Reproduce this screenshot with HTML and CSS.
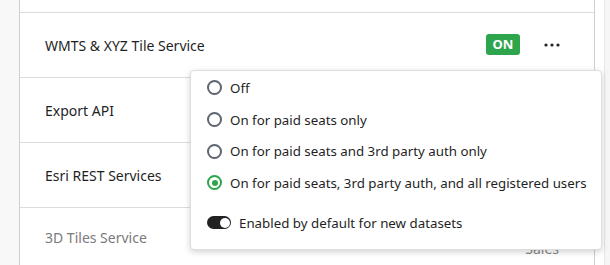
FILE: index.html
```html
<!DOCTYPE html>
<html>
<head>
<meta charset="utf-8">
<link rel="stylesheet" href="styles.css">
</head>
<body>
<div class="page">
  <div class="sidebar"></div>
  <div class="main">
    <div class="row row-top"></div>
    <div class="row row-active">
      <span class="label">WMTS &amp; XYZ Tile Service</span>
      <div class="actions">
        <span class="badge">ON</span>
        <svg class="dots" width="16" height="4" viewBox="0 0 16 4"><circle cx="2" cy="2" r="1.6" fill="#222"/><circle cx="8" cy="2" r="1.6" fill="#222"/><circle cx="14" cy="2" r="1.6" fill="#222"/></svg>
      </div>
      <div class="popup">
        <label class="opt"><span class="radio"></span><span>Off</span></label>
        <label class="opt"><span class="radio"></span><span>On for paid seats only</span></label>
        <label class="opt"><span class="radio"></span><span>On for paid seats and 3rd party auth only</span></label>
        <label class="opt"><span class="radio checked"></span><span>On for paid seats, 3rd party auth, and all registered users</span></label>
        <label class="opt toggle-row"><span class="toggle"><span class="knob"></span></span><span>Enabled by default for new datasets</span></label>
      </div>
    </div>
    <div class="row"><span class="label">Export API</span></div>
    <div class="row"><span class="label">Esri REST Services</span></div>
    <div class="row row-last">
      <span class="label muted">3D Tiles Service</span>
      <span class="sales">Sales</span>
    </div>
  </div>
  <div class="gutter"></div>
  <div class="rest"></div>
</div>
</body>
</html>
```
FILE: styles.css
```css
html, body {
  margin: 0;
  padding: 0;
  height: 100%;
  overflow: hidden;
}
body {
  font-family: "Noto Sans", "Open Sans", sans-serif;
  font-size: 14px;
  color: #1f1f1f;
  background: #f8f8f8;
}
.page {
  display: flex;
  height: 265px;
}
.sidebar {
  width: 19px;
  background: #f8f8f8;
  border-right: 1px solid #cfcfcf;
}
.main {
  width: 574px;
  background: #fff;
  border-right: 1px solid #cfcfcf;
  display: flex;
  flex-direction: column;
}
.gutter {
  width: 9px;
  background: #fff;
  border-right: 1px solid #e6e6e6;
}
.rest {
  flex: 1;
  background: #f6f6f6;
}
.row {
  height: 64px;
  border-bottom: 1px solid #dcdcdc;
  display: flex;
  align-items: center;
  padding: 0 34px 0 25px;
  flex-shrink: 0;
  position: relative;
}
.row-top {
  height: 12px;
}
.row-last {
  border-bottom: none;
  align-items: flex-start;
  padding-top: 20px;
  box-sizing: border-box;
}
.label {
  flex: 1;
}
.muted {
  color: #7a7a7a;
}
.actions {
  display: flex;
  align-items: center;
  gap: 24px;
  margin-top: -1px;
}
.badge {
  background: #2ea44c;
  color: #fff;
  font-weight: 700;
  font-size: 13px;
  width: 34px;
  height: 21px;
  line-height: 21px;
  text-align: center;
  border-radius: 3px;
}
.dots {
  display: block;
}
.sales {
  color: #888;
  margin-top: 11px;
  margin-right: 1px;
}
.popup {
  position: absolute;
  left: 170px;
  top: 57px;
  width: 378px;
  padding: 1px 16px 11px 16px;
  background: #fff;
  border: 1px solid #dedede;
  border-radius: 4px;
  box-shadow: 0 2px 6px rgba(0,0,0,0.18);
  display: flex;
  flex-direction: column;
  z-index: 5;
  font-size: 13.3px;
}
.opt {
  height: 31.7px;
  display: flex;
  align-items: center;
  gap: 8px;
  white-space: nowrap;
}
.radio {
  width: 15px;
  height: 15px;
  box-sizing: border-box;
  border: 2px solid #5d6670;
  border-radius: 50%;
  flex-shrink: 0;
  position: relative;
}
.radio.checked {
  border-color: #2ea44c;
}
.radio.checked::after {
  content: "";
  position: absolute;
  left: 2.5px;
  top: 2.5px;
  width: 6px;
  height: 6px;
  border-radius: 50%;
  background: #2ea44c;
}
.toggle-row {
  margin-top: 8px;
}
.toggle {
  width: 24px;
  height: 13px;
  border-radius: 7px;
  background: #222;
  position: relative;
  flex-shrink: 0;
}
.knob {
  position: absolute;
  right: 1.5px;
  top: 1.5px;
  width: 10px;
  height: 10px;
  border-radius: 50%;
  background: #fff;
}
```
